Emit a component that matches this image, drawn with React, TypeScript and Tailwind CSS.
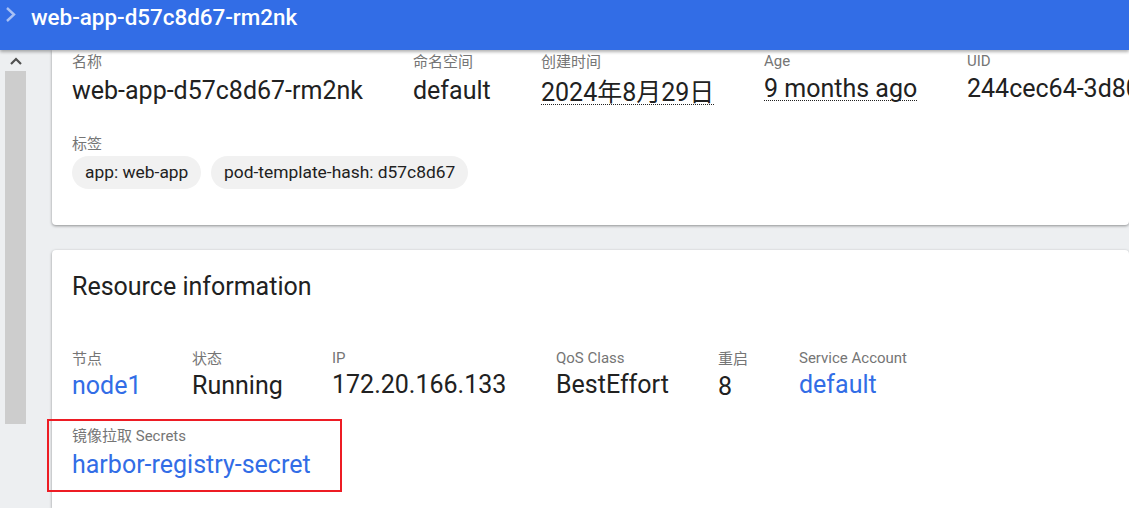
import React from "react";

const FONT = "font-['Roboto','Noto_Sans_CJK_SC',sans-serif]";

function Field({ label, value, link, dotted, className = "", valueClass = "" }: { label: string; value: string; link?: boolean; dotted?: boolean; className?: string; valueClass?: string }) {
  return (
    <div className={`flex flex-col shrink-0 ${className}`}>
      <div className="text-[15px] leading-[20px] text-[#757575] whitespace-nowrap">{label}</div>
      <div className={`text-[25px] leading-[34px] whitespace-nowrap ${link ? "text-[#326de6]" : "text-[#212121]"} ${valueClass}`}>
        {dotted ? <span className="border-b border-dotted border-[#212121] inline-block leading-[22px]">{value}</span> : value}
      </div>
    </div>
  );
}

export default function App() {
  return (
    <div className={`${FONT} w-[1129px] h-[508px] overflow-hidden bg-[#edeff1] flex flex-col`}>
      <header className="relative z-10 h-[50px] shrink-0 bg-[#326de6] shadow-[0_2px_3px_rgba(0,0,0,0.3)] flex items-start">
        <svg width="14" height="18" viewBox="0 0 14 18" className="ml-[4px] mt-[5px]" fill="none" stroke="#a9c1f5" strokeWidth="2.4">
          <path d="M3 3 L10 9.5 L3 16" />
        </svg>
        <div className="ml-[13px] mt-[1px] text-[22.4px] leading-[32px] font-medium text-white whitespace-nowrap">web-app-d57c8d67-rm2nk</div>
      </header>
      <div className="flex flex-1 min-h-0">
        <div className="w-[21px] ml-[5px] shrink-0 flex flex-col">
          <div className="h-[21px] flex items-center justify-center">
            <svg width="12" height="8" viewBox="0 0 12 8" fill="none" stroke="#505050" strokeWidth="2.2">
              <path d="M1 7 L6 2 L11 7" />
            </svg>
          </div>
          <div className="h-[353px] bg-[#cdcdcd]" />
        </div>
        <main className="flex-1 min-w-0 ml-[26px] flex flex-col gap-[25px]">
          <section className="h-[175px] bg-white rounded-b-[4px] shadow-[0_1px_3px_rgba(0,0,0,0.4)] pl-[20px] pt-[1px] shrink-0 overflow-hidden">
            <div className="flex">
              <Field className="w-[341px] pt-[1px]" valueClass="mt-[2px]" label="名称" value="web-app-d57c8d67-rm2nk" />
              <Field className="w-[128px] pt-[1px]" valueClass="mt-[2px]" label="命名空间" value="default" />
              <Field className="w-[223px] pt-[1px]" valueClass="mt-[4px]" label="创建时间" value="2024年8月29日" dotted />
              <Field className="w-[203px]" valueClass="mt-[1px]" label="Age" value="9 months ago" dotted />
              <Field label="UID" valueClass="mt-[1px]" value="244cec64-3d80-4b6f-9a11" />
            </div>
            <div className="mt-[24px] text-[15px] leading-[20px] text-[#757575]">标签</div>
            <div className="flex gap-[10px] mt-[2px]">
              <div className="h-[33px] w-[129px] rounded-full bg-[#f1f1f1] px-[13px] flex items-center text-[17.4px] text-[#212121] whitespace-nowrap">app: web-app</div>
              <div className="h-[33px] rounded-full bg-[#f1f1f1] px-[13px] flex items-center text-[17.4px] text-[#212121] whitespace-nowrap">pod-template-hash: d57c8d67</div>
            </div>
          </section>
          <section className="flex-1 bg-white rounded-t-[4px] shadow-[0_1px_3px_rgba(0,0,0,0.4)] pl-[20px] pt-[21px]">
            <h2 className="text-[25px] leading-[32px] text-[#212121]">Resource information</h2>
            <div className="flex mt-[45px]">
              <Field className="w-[120px] pt-[1px]" label="节点" value="node1" link />
              <Field className="w-[140px] pt-[1px]" label="状态" value="Running" />
              <Field className="w-[224px]" label="IP" value="172.20.166.133" />
              <Field className="w-[162px]" label="QoS Class" value="BestEffort" />
              <Field className="w-[81px] pt-[1px]" valueClass="mt-[1px]" label="重启" value="8" />
              <Field label="Service Account" value="default" link />
            </div>
            <div className="relative mt-[15px] w-fit">
              <div className="absolute left-[-25px] top-[0px] w-[295px] h-[73px] border-2 border-[#ed1c24]" />
              <Field label="镜像拉取 Secrets" value="harbor-registry-secret" link className="pt-[7px]" valueClass="mt-[2px]" />
            </div>
          </section>
        </main>
      </div>
    </div>
  );
}
